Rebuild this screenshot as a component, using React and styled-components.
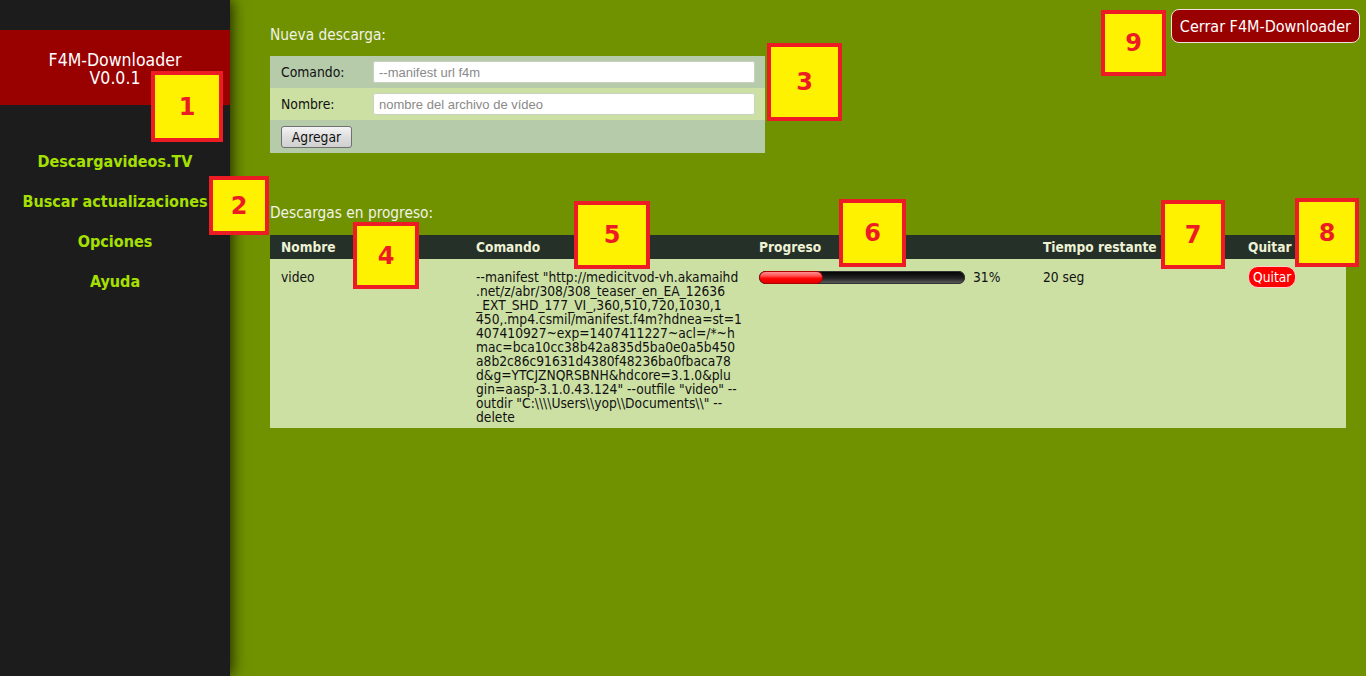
import React from 'react';
import styled, { createGlobalStyle } from 'styled-components';

const GlobalStyle = createGlobalStyle`
    html, body {
        margin: 0;
        padding: 0;
        height: 100%;
    }
    body {
        font-family: "DejaVu Sans Condensed", "DejaVu Sans", sans-serif;
        background: #709200;
        overflow: hidden;
    }
`;

const commandLines = [
    '--manifest "http://medicitvod-vh.akamaihd',
    '.net/z/abr/308/308_teaser_en_EA_12636',
    '_EXT_SHD_177_VI_,360,510,720,1030,1',
    '450,.mp4.csmil/manifest.f4m?hdnea=st=1',
    '407410927~exp=1407411227~acl=/*~h',
    'mac=bca10cc38b42a835d5ba0e0a5b450',
    'a8b2c86c91631d4380f48236ba0fbaca78',
    'd&g=YTCJZNQRSBNH&hdcore=3.1.0&plu',
    'gin=aasp-3.1.0.43.124" --outfile "video" --',
    'outdir "C:\\\\\\\\Users\\\\yop\\\\Documents\\\\" --',
    'delete',
];

// numbered callouts laid over the screenshot
const markers = [
    { n: 1, x: 151, y: 71, w: 72, h: 71 },
    { n: 2, x: 209, y: 176, w: 60, h: 59 },
    { n: 3, x: 767, y: 43, w: 75, h: 78 },
    { n: 4, x: 353, y: 222, w: 66, h: 67 },
    { n: 5, x: 574, y: 201, w: 76, h: 68 },
    { n: 6, x: 839, y: 199, w: 67, h: 68 },
    { n: 7, x: 1161, y: 200, w: 64, h: 69 },
    { n: 8, x: 1295, y: 198, w: 64, h: 69 },
    { n: 9, x: 1101, y: 10, w: 65, h: 66 },
];

const navItems = ['Descargavideos.TV', 'Buscar actualizaciones', 'Opciones', 'Ayuda'];

const App = () => {
    const progress = 31;

    return (
        <Page>
            <GlobalStyle />
            <Sidebar>
                <Brand>
                    F4M-Downloader<br />V0.0.1
                </Brand>
                <Nav>
                    {navItems.map((item) => <NavLink key={item}>{item}</NavLink>)}
                </Nav>
            </Sidebar>

            <Main>
                <CloseButton>Cerrar F4M-Downloader</CloseButton>
                <SectionTitle>Nueva descarga:</SectionTitle>
                <FormPanel>
                    <FormRow>
                        <FormLabel htmlFor="comando">Comando:</FormLabel>
                        <Input id="comando" placeholder="--manifest url f4m" />
                    </FormRow>
                    <FormRow $light>
                        <FormLabel htmlFor="nombre">Nombre:</FormLabel>
                        <Input id="nombre" placeholder="nombre del archivo de vídeo" />
                    </FormRow>
                    <ButtonRow>
                        <AddButton>Agregar</AddButton>
                    </ButtonRow>
                </FormPanel>

                <SectionTitle $gap>Descargas en progreso:</SectionTitle>
                <Table>
                    <HeadCell>Nombre</HeadCell>
                    <HeadCell>Comando</HeadCell>
                    <HeadCell>Progreso</HeadCell>
                    <HeadCell>Tiempo restante</HeadCell>
                    <HeadCell>Quitar</HeadCell>

                    <Cell>video</Cell>
                    <Cell>
                        {commandLines.map((line, i) => <CommandLine key={i}>{line}</CommandLine>)}
                    </Cell>
                    <Cell>
                        <ProgressWrap>
                            <ProgressTrack>
                                <ProgressFill style={{ width: `${progress}%` }} />
                            </ProgressTrack>
                            <Percent>{progress}%</Percent>
                        </ProgressWrap>
                    </Cell>
                    <Cell>20 seg</Cell>
                    <Cell>
                        <RemoveButton>Quitar</RemoveButton>
                    </Cell>
                </Table>
            </Main>

            {markers.map((m) => (
                <Marker key={m.n} style={{ left: m.x, top: m.y, width: m.w, height: m.h }}>
                    {m.n}
                </Marker>
            ))}
        </Page>
    );
};

const Page = styled.div`
    position: relative;
    display: flex;
    width: 1366px;
    height: 676px;
    background: #709200;
`;

const Sidebar = styled.div`
    position: relative;
    z-index: 1;
    width: 230px;
    flex-shrink: 0;
    height: 100%;
    padding-top: 30px;
    box-sizing: border-box;
    background: #1c1c1c;
    box-shadow: 2px 0 14px rgba(0, 0, 0, 0.75);
`;

const Brand = styled.div`
    height: 75px;
    padding-top: 21px;
    box-sizing: border-box;
    background: #990000;
    color: #fff;
    font-size: 17.5px;
    line-height: 18px;
    text-align: center;
`;

const Nav = styled.nav`
    display: flex;
    flex-direction: column;
    margin-top: 37px;
`;

const NavLink = styled.a`
    display: block;
    height: 40px;
    line-height: 40px;
    text-align: center;
    color: #a6e000;
    font-weight: bold;
    font-size: 16px;
    cursor: pointer;
`;

const Main = styled.div`
    flex: 1;
    padding: 9px 20px 0 40px;
`;

const CloseButton = styled.button`
    float: right;
    margin-right: -14px;
    height: 34px;
    padding: 0 8px;
    background: #990000;
    color: #fff;
    border: 1px solid #f0e0e0;
    border-radius: 8px;
    font-family: inherit;
    font-size: 16px;
    cursor: pointer;
`;

const SectionTitle = styled.div`
    padding-top: ${(p) => (p.$gap ? '0' : '17px')};
    margin-top: ${(p) => (p.$gap ? '51px' : '0')};
    height: 18px;
    line-height: 18px;
    color: #f2f2e8;
    font-size: 15.3px;
    margin-bottom: ${(p) => (p.$gap ? '13px' : '12px')};
`;

const FormPanel = styled.div`
    width: 495px;
    background: #b5cbaa;
`;

const FormRow = styled.div`
    display: flex;
    align-items: center;
    height: 32px;
    padding: 0 10px 0 11px;
    background: ${(p) => (p.$light ? '#cce0a4' : 'transparent')};
`;

const FormLabel = styled.label`
    width: 92px;
    color: #111;
    font-size: 13.8px;
`;

const Input = styled.input`
    flex: 1;
    height: 22px;
    box-sizing: border-box;
    padding: 0 5px;
    border: 1px solid #c8d0c0;
    border-radius: 2px;
    background: #fff;
    font-family: "Liberation Sans", Arial, sans-serif;
    font-size: 13px;
    outline: none;

    &::placeholder {
        color: #8a8a8a;
    }
`;

const ButtonRow = styled.div`
    height: 33px;
    padding: 6px 11px 0;
    box-sizing: border-box;
`;

const AddButton = styled.button`
    height: 22px;
    width: 71px;
    padding: 0;
    border: 1px solid #707070;
    border-radius: 3px;
    background: linear-gradient(#f4f4f4, #dedede 50%, #d0d0d0);
    color: #111;
    font-family: inherit;
    font-size: 13.8px;
    cursor: pointer;
`;

const Table = styled.div`
    display: grid;
    grid-template-columns: 195px 283px 284px 205px 1fr;
    width: 1076px;
`;

const HeadCell = styled.div`
    height: 24px;
    line-height: 24px;
    padding-left: 11px;
    background: #253029;
    color: #eef2d4;
    font-weight: bold;
    font-size: 13.6px;
`;

const Cell = styled.div`
    padding: 11px 0 4px 11px;
    background: #cce0a4;
    color: #111;
    font-size: 13.7px;
    line-height: 14px;
`;

const CommandLine = styled.span`
    display: block;
    white-space: nowrap;
    height: 14px;
`;

const ProgressWrap = styled.div`
    display: flex;
    align-items: center;
    gap: 8px;
`;

const ProgressTrack = styled.div`
    width: 206px;
    height: 13px;
    border-radius: 7px;
    overflow: hidden;
    background: linear-gradient(#000 0%, #222 55%, #666 100%);
    box-shadow: inset 0 0 0 1px #333;
`;

const ProgressFill = styled.div`
    height: 100%;
    border-radius: 7px;
    box-sizing: border-box;
    border: 1px solid #b00000;
    background: linear-gradient(#ff9090 0%, #ff5050 35%, #ff0000 60%, #e00000 100%);
`;

const Percent = styled.span`
    font-size: 13.7px;
`;

const RemoveButton = styled.button`
    margin-top: -4px;
    height: 22px;
    padding: 0 4px;
    border: 1px solid #ffd0d0;
    border-radius: 10px;
    background: #ff0000;
    color: #fff;
    font-family: inherit;
    font-size: 13.7px;
    cursor: pointer;
`;

const Marker = styled.div`
    position: absolute;
    z-index: 5;
    box-sizing: border-box;
    display: flex;
    align-items: center;
    justify-content: center;
    border: 4px solid #ed1c24;
    background: #fff200;
    color: #ed1c24;
    font-family: "DejaVu Sans", sans-serif;
    font-weight: bold;
    font-size: 24px;
`;

export default App;
